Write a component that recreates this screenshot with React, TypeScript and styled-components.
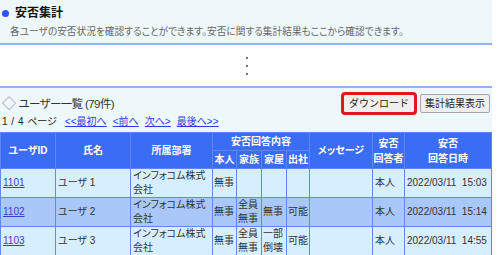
import styled, { createGlobalStyle } from "styled-components";

const GlobalStyle = createGlobalStyle`
  html, body {
    margin: 0;
    padding: 0;
    background: #ffffff;
  }
  body {
    font-family: "Liberation Sans", "Noto Sans CJK JP", sans-serif;
    color: #222;
    font-feature-settings: "palt";
  }
`;

const Page = styled.div`
  width: 492px;
`;

const HeaderSection = styled.section`
  background: #eef8fb;
  border-bottom: 2px solid #8db4f8;
  height: 45px;
  box-sizing: border-box;
  padding-top: 5px;
`;

const TitleRow = styled.div`
  display: flex;
  align-items: center;
  gap: 6px;
  padding-left: 2px;
  height: 16px;
`;

const Dot = styled.span`
  width: 7px;
  height: 7px;
  border-radius: 50%;
  background: #2a55f2;
`;

const Title = styled.h1`
  margin: 0;
  font-size: 12px;
  font-weight: bold;
  color: #111;
  line-height: 16px;
`;

const Description = styled.p`
  margin: 4px 0 0 10px;
  font-size: 9.7px;
  line-height: 14px;
  color: #666;
`;

const Omitted = styled.div`
  height: 41px;
  display: flex;
  flex-direction: column;
  align-items: center;
  justify-content: center;
  gap: 6px;
  padding-left: 1px;
`;

const OmitDot = styled.span`
  width: 2px;
  height: 2px;
  background: #777;
`;

const ListSection = styled.section`
  background: #eef8fb;
  border-top: 2px solid #8db4f8;
  padding-top: 5px;
  min-height: 170px;
`;

const Toolbar = styled.div`
  display: flex;
  align-items: center;
  height: 20px;
`;

const ListTitle = styled.h2`
  margin: 0 0 0 2px;
  font-size: 11.5px;
  letter-spacing: -0.6px;
  font-weight: normal;
  color: #333;
  display: flex;
  align-items: center;
  gap: 3px;
  flex: 1;
`;

const Diamond = styled.span`
  color: #9a7fb0;
  font-size: 14px;
  line-height: 14px;
`;

const Button = styled.button<{ $highlighted?: boolean }>`
  font-family: inherit;
  font-size: 10px;
  height: 19px;
  padding: 0 ${(p) => (p.$highlighted ? "5px" : "4px")};
  margin-left: ${(p) => (p.$highlighted ? "0" : "5px")};
  background: #efefef;
  border: 1px solid #a6a6a6;
  border-radius: 2px;
  color: #222;
  line-height: 17px;
  outline: ${(p) => (p.$highlighted ? "3px solid #e0191f" : "none")};
  outline-offset: -1px;
  &:last-child {
    margin-right: 2px;
  }
`;

const Pager = styled.div`
  display: flex;
  align-items: center;
  gap: 6px;
  font-size: 10px;
  line-height: 12px;
  height: 12px;
  margin: 3px 0 4px 2px;
  color: #222;
`;

const PageInfo = styled.span`
  margin-right: 2px;
  word-spacing: 1px;
`;

const PagerLink = styled.a`
  color: #2a3ce6;
  text-decoration: underline;
`;

const Table = styled.table`
  width: 491px;
  border-collapse: collapse;
  table-layout: fixed;
  font-size: 10px;
`;

const HeadCell = styled.th`
  background: #3a6cf4;
  color: #fff;
  font-weight: bold;
  font-size: 10px;
  border: 1px solid #5d86f3;
  height: 17px;
  padding: 0;
  line-height: 15px;
  text-align: center;
  white-space: nowrap;
`;

const Row = styled.tr<{ $even?: boolean }>`
  background: ${(p) => (p.$even ? "#a9c7f8" : "#d6eefe")};
`;

const Cell = styled.td<{ $narrow?: boolean; $nowrap?: boolean }>`
  border: 1px solid #5f88f0;
  height: 28px;
  padding: ${(p) => (p.$narrow ? "0 0 0 1px" : p.$nowrap ? "0 0 0 2px" : "0 2px")};
  color: #333;
  line-height: 14px;
  vertical-align: middle;
  overflow: hidden;
  word-break: break-all;
  white-space: ${(p) => (p.$nowrap ? "nowrap" : "normal")};
`;

const IdLink = styled.a`
  color: #3b3bd0;
  text-decoration: underline;
`;

type Entry = {
  id: string;
  name: string;
  dept: string;
  self: string;
  family: string;
  house: string;
  work: string;
  message: string;
  responder: string;
  time: string;
};

const entries: Entry[] = [
  {
    id: "1101",
    name: "ユーザ 1",
    dept: "インフォコム株式会社",
    self: "無事",
    family: "",
    house: "",
    work: "",
    message: "",
    responder: "本人",
    time: "2022/03/11\u00a0\u00a015:03",
  },
  {
    id: "1102",
    name: "ユーザ 2",
    dept: "インフォコム株式会社",
    self: "無事",
    family: "全員無事",
    house: "無事",
    work: "可能",
    message: "",
    responder: "本人",
    time: "2022/03/11\u00a0\u00a015:14",
  },
  {
    id: "1103",
    name: "ユーザ 3",
    dept: "インフォコム株式会社",
    self: "無事",
    family: "全員無事",
    house: "一部倒壊",
    work: "可能",
    message: "",
    responder: "本人",
    time: "2022/03/11\u00a0\u00a014:55",
  },
];

const colWidths = [55, 75, 82, 24, 25, 25, 23, 63, 32, 87];

export default function App() {
  return (
    <Page>
      <GlobalStyle />
      <HeaderSection>
        <TitleRow>
          <Dot />
          <Title>安否集計</Title>
        </TitleRow>
        <Description>
          各ユーザの安否状況を確認することができます。安否に関する集計結果もここから確認できます。
        </Description>
      </HeaderSection>

      <Omitted>
        <OmitDot />
        <OmitDot />
        <OmitDot />
      </Omitted>

      <ListSection>
        <Toolbar>
          <ListTitle>
            <Diamond>◇</Diamond>
            ユーザー一覧 (79件)
          </ListTitle>
          <Button $highlighted>ダウンロード</Button>
          <Button>集計結果表示</Button>
        </Toolbar>
        <Pager>
          <PageInfo>1 / 4 ページ</PageInfo>
          <PagerLink href="#">&lt;&lt;最初へ</PagerLink>
          <PagerLink href="#">&lt;前へ</PagerLink>
          <PagerLink href="#">次へ&gt;</PagerLink>
          <PagerLink href="#">最後へ&gt;&gt;</PagerLink>
        </Pager>
        <Table>
          <colgroup>
            {colWidths.map((w, i) => (
              <col key={i} style={{ width: w }} />
            ))}
          </colgroup>
          <thead>
            <tr>
              <HeadCell rowSpan={2}>ユーザID</HeadCell>
              <HeadCell rowSpan={2}>氏名</HeadCell>
              <HeadCell rowSpan={2}>所属部署</HeadCell>
              <HeadCell colSpan={4}>安否回答内容</HeadCell>
              <HeadCell rowSpan={2}>メッセージ</HeadCell>
              <HeadCell rowSpan={2}>
                安否
                <br />
                回答者
              </HeadCell>
              <HeadCell rowSpan={2}>
                安否
                <br />
                回答日時
              </HeadCell>
            </tr>
            <tr>
              <HeadCell>本人</HeadCell>
              <HeadCell>家族</HeadCell>
              <HeadCell>家屋</HeadCell>
              <HeadCell>出社</HeadCell>
            </tr>
          </thead>
          <tbody>
            {entries.map((e, i) => (
              <Row key={e.id} $even={i % 2 === 1}>
                <Cell>
                  <IdLink href="#">{e.id}</IdLink>
                </Cell>
                <Cell>{e.name}</Cell>
                <Cell>{e.dept}</Cell>
                <Cell $narrow>{e.self}</Cell>
                <Cell $narrow>{e.family}</Cell>
                <Cell $narrow>{e.house}</Cell>
                <Cell $narrow>{e.work}</Cell>
                <Cell>{e.message}</Cell>
                <Cell>{e.responder}</Cell>
                <Cell $nowrap>{e.time}</Cell>
              </Row>
            ))}
          </tbody>
        </Table>
      </ListSection>
    </Page>
  );
}
